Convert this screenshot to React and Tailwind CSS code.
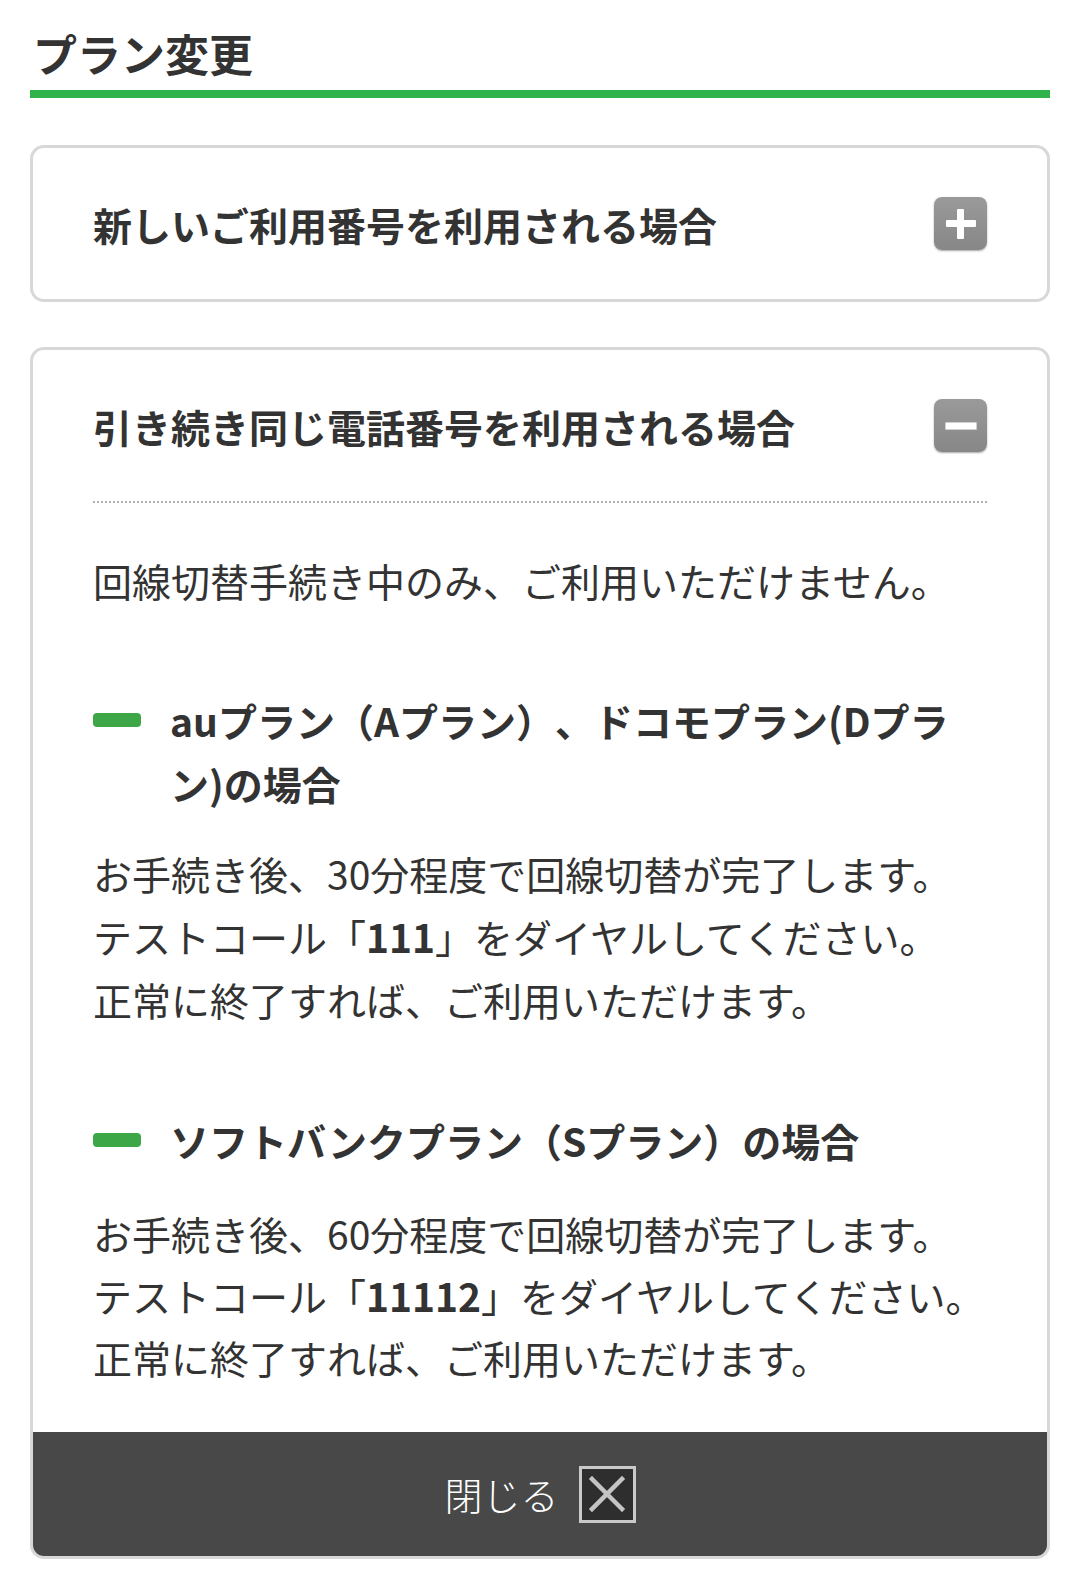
import React from "react";

const FONT = { fontFamily: '"Noto Sans CJK JP", "Noto Sans", sans-serif' };

function PlusIcon() {
  return (
    <div className="relative w-[53px] h-[53px] rounded-[8px] bg-gradient-to-b from-[#9a9a9a] to-[#878787] shadow-[0_1px_2px_rgba(0,0,0,0.35)] flex items-center justify-center shrink-0">
      <div className="absolute w-[30px] h-[7px] bg-white rounded-[1px]" />
      <div className="absolute w-[7px] h-[30px] bg-white rounded-[1px]" />
    </div>
  );
}

function MinusIcon() {
  return (
    <div className="relative w-[53px] h-[53px] rounded-[8px] bg-gradient-to-b from-[#9a9a9a] to-[#878787] shadow-[0_1px_2px_rgba(0,0,0,0.35)] flex items-center justify-center shrink-0">
      <div className="w-[32px] h-[8px] bg-white rounded-[1px] border border-[#d0d0d0]" />
    </div>
  );
}

function Marker() {
  return <div className="w-[48px] h-[14px] rounded-[4px] bg-[#3da647] shrink-0 mt-[24px]" />;
}

export default function App() {
  return (
    <div
      className="bg-white w-[1080px] min-h-[1587px] px-[30px] pt-[20px] text-[#333333] [text-spacing-trim:space-all]"
      style={FONT}
    >
      <h1 className="text-[44px] font-bold leading-[66px] pl-[3px] pb-[4px] border-b-[8px] border-[#30b34a]">
        プラン変更
      </h1>

      <div className="mt-[47px] border-[3px] border-[#d8d8d8] rounded-[14px] bg-white">
        <div className="h-[151px] px-[60px] flex items-center justify-between">
          <span className="text-[39px] font-bold leading-[62px]">新しいご利用番号を利用される場合</span>
          <PlusIcon />
        </div>
      </div>

      <div className="mt-[45px] border-[3px] border-[#d8d8d8] rounded-[14px] bg-white overflow-hidden">
        <div className="h-[151px] px-[60px] flex items-center justify-between">
          <span className="text-[39px] font-bold leading-[62px]">引き続き同じ電話番号を利用される場合</span>
          <MinusIcon />
        </div>
        <div className="px-[60px]">
          <div className="border-t-[2px] border-dotted border-[#b0b0b0]" />
          <p className="mt-[46px] text-[39px] leading-[63px]">回線切替手続き中のみ、ご利用いただけません。</p>

          <div className="mt-[77px] flex gap-[29px]">
            <Marker />
            <h2 className="text-[39px] font-bold leading-[63px]">
              auプラン（Aプラン）、ドコモプラン(Dプラ<br />ン)の場合
            </h2>
          </div>
          <p className="mt-[27px] text-[39px] leading-[63px]">
            お手続き後、30分程度で回線切替が完了します。<br />
            テストコール「<span className="font-bold">111</span>」をダイヤルしてください。<br />
            正常に終了すれば、ご利用いただけます。
          </p>

          <div className="mt-[78px] flex gap-[29px]">
            <Marker />
            <h2 className="text-[39px] font-bold leading-[63px]">ソフトバンクプラン（Sプラン）の場合</h2>
          </div>
          <p className="mt-[30px] text-[39px] leading-[62px]">
            お手続き後、60分程度で回線切替が完了します。<br />
            テストコール「<span className="font-bold">11112</span>」をダイヤルしてください。<br />
            正常に終了すれば、ご利用いただけます。
          </p>
        </div>
        <div className="mt-[44px] h-[124px] bg-[#484848] flex items-center justify-center gap-[20px]">
          <span className="text-white text-[38px] leading-[50px] font-light">閉じる</span>
          <div className="w-[57px] h-[57px] border-[3px] border-[#c9c9c9] bg-[#2e2e2e] flex items-center justify-center">
            <svg width="42" height="42" viewBox="0 0 42 42">
              <path d="M6 6 L36 36 M36 6 L6 36" stroke="#c4c4c4" strokeWidth="4.5" strokeLinecap="square" />
            </svg>
          </div>
        </div>
      </div>
    </div>
  );
}
